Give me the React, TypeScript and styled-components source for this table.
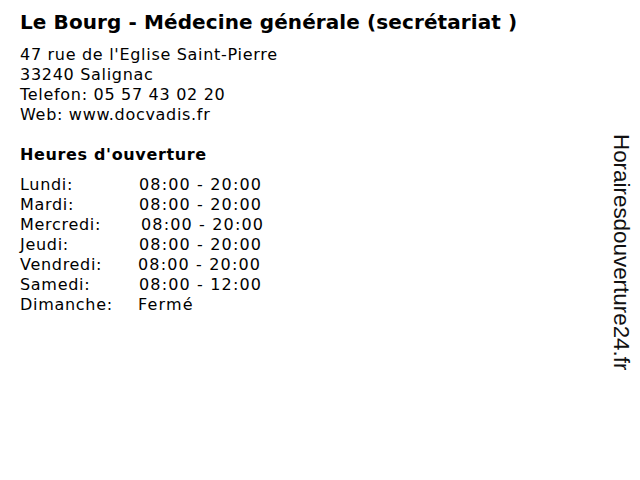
import React from 'react'
import styled, { createGlobalStyle } from 'styled-components'

const Global = createGlobalStyle`
  html, body {
    margin: 0;
    padding: 0;
    background: #fff;
  }
`

const Page = styled.main`
  position: relative;
  width: 640px;
  height: 480px;
  overflow: hidden;
  padding: 8px 20px 0;
  box-sizing: border-box;
  font-family: 'DejaVu Sans', sans-serif;
  color: #000;
`

const Title = styled.h1`
  margin: 0;
  font-size: 20px;
  line-height: 28px;
  letter-spacing: 0.1px;
  font-weight: bold;
`

const Address = styled.div`
  margin-top: 9px;
  font-size: 16px;
  line-height: 20px;
  letter-spacing: 0.7px;
`

const Heading = styled.h2`
  margin: 18px 0 0;
  font-size: 16px;
  line-height: 24px;
  letter-spacing: 0.65px;
  font-weight: bold;
`

const Hours = styled.div`
  margin-top: 8px;
  display: grid;
  grid-template-columns: 119px auto;
  font-size: 16px;
  line-height: 20px;
  letter-spacing: 0.7px;
  white-space: nowrap;
`

const Time = styled.span<{ $shift?: number }>`
  margin-left: ${p => p.$shift ?? 0}px;
  letter-spacing: 1.15px;
`

const Brand = styled.div`
  position: absolute;
  top: 134px;
  right: 6px;
  writing-mode: vertical-rl;
  font-family: 'Liberation Sans', Arial, sans-serif;
  font-size: 22.4px;
  color: #111;
`

const days: [string, string, number][] = [
  ['Lundi:', '08:00 - 20:00', 0],
  ['Mardi:', '08:00 - 20:00', 0],
  ['Mercredi:', '08:00 - 20:00', 2],
  ['Jeudi:', '08:00 - 20:00', 0],
  ['Vendredi:', '08:00 - 20:00', -1],
  ['Samedi:', '08:00 - 12:00', 0],
  ['Dimanche:', 'Fermé', -1],
]

const App = () => {
  return (
    <Page>
      <Global />
      <Title>Le Bourg - Médecine générale (secrétariat )</Title>
      <Address>
        <div>47 rue de l'Eglise Saint-Pierre</div>
        <div>33240 Salignac</div>
        <div>Telefon: 05 57 43 02 20</div>
        <div>Web: www.docvadis.fr</div>
      </Address>
      <Heading>Heures d'ouverture</Heading>
      <Hours>
        {days.map(([day, time, shift]) => (
          <React.Fragment key={day}>
            <span>{day}</span>
            <Time $shift={shift}>{time}</Time>
          </React.Fragment>
        ))}
      </Hours>
      <Brand>Horairesdouverture24.fr</Brand>
    </Page>
  )
}

export default App
